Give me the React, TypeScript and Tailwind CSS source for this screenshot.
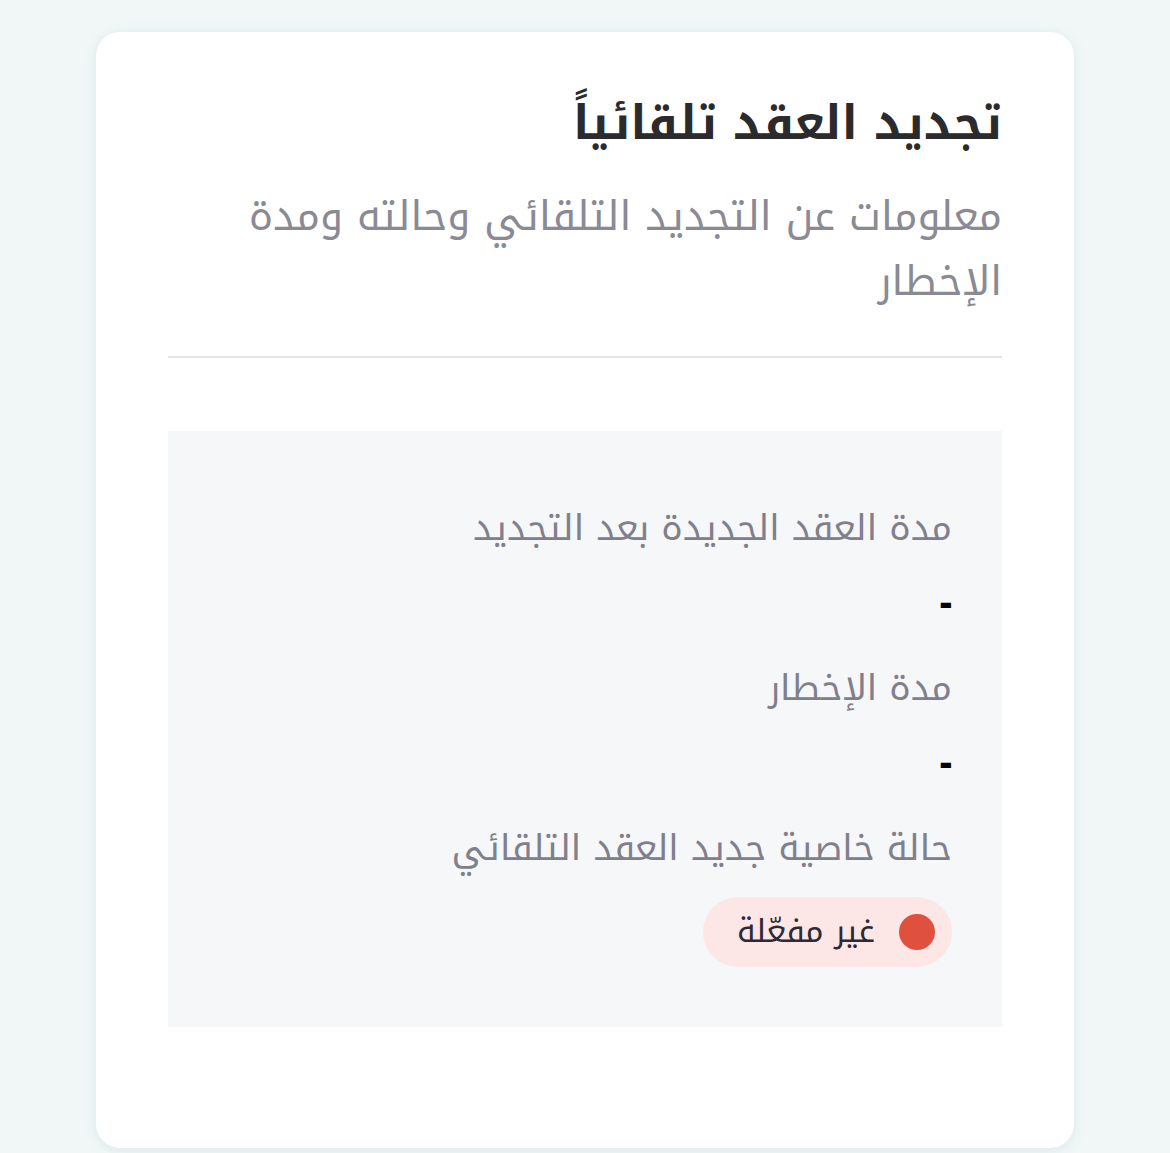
export default function App() {
  return (
    <main
      dir="rtl"
      className="min-h-[1153px] bg-[#f1f7f7] px-[96px] pt-[32px] pb-[5px]"
      style={{ fontFamily: '"Noto Kufi Arabic", "Noto Sans Arabic", sans-serif' }}
    >
      <section className="rounded-[24px] bg-white px-[72px] pt-[62px] pb-[121px] shadow-[0_2px_12px_rgba(150,190,190,0.25)]">
        <h1 className="text-[47px] font-bold leading-[60px] text-[#2b2b2e]">تجديد العقد تلقائياً</h1>
        <p className="mt-[30px] text-[41px] leading-[65px] text-[#8a8a95]">
          معلومات عن التجديد التلقائي وحالته ومدة الإخطار
        </p>
        <div className="mt-[42px] h-[2px] bg-[#e2e6e7]" />

        <div className="mt-[73px] bg-[#f6f7f9] px-[50px] pt-[73px] pb-[60px]">
          <div className="flex flex-col">
            <div className="text-[36px] leading-[48px] text-[#80808c]">مدة العقد الجديدة بعد التجديد</div>
            <div className="mt-[27px] text-[38px] font-extrabold leading-[48px] text-black">-</div>

            <div className="mt-[37px] text-[36px] leading-[48px] text-[#80808c]">مدة الإخطار</div>
            <div className="mt-[27px] text-[38px] font-extrabold leading-[48px] text-black">-</div>

            <div className="mt-[37px] text-[36px] leading-[48px] text-[#80808c]">حالة خاصية جديد العقد التلقائي</div>
            <div className="mt-[25px] flex">
              <span className="flex h-[70px] items-center gap-[24px] rounded-full bg-[#fce7e6] pr-[17px] pl-[34px]">
                <span className="h-[36px] w-[36px] rounded-full bg-[#e0503f]" />
                <span className="text-[32px] leading-[48px] text-[#2c2a36]">غير مفعّلة</span>
              </span>
            </div>
          </div>
        </div>
      </section>
    </main>
  );
}
